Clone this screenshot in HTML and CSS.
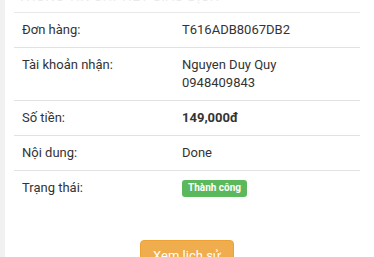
FILE: index.html
```html
<!DOCTYPE html>
<html lang="vi">
<head>
<meta charset="utf-8">
<link rel="stylesheet" href="styles.css">
</head>
<body>
<div class="page">
  <div class="card">
    <h3 class="title">THÔNG TIN CHI TIẾT GIAO DỊCH</h3>
    <table class="info">
      <tr><td class="lbl">Đơn hàng:</td><td>T616ADB8067DB2</td></tr>
      <tr><td class="lbl">Tài khoản nhận:</td><td>Nguyen Duy Quy<br>0948409843</td></tr>
      <tr><td class="lbl">Số tiền:</td><td><b>149,000đ</b></td></tr>
      <tr><td class="lbl">Nội dung:</td><td>Done</td></tr>
      <tr><td class="lbl">Trạng thái:</td><td><span class="badge">Thành công</span></td></tr>
    </table>
    <div class="actions"><button class="btn">Xem lịch sử</button></div>
  </div>
</div>
</body>
</html>
```

FILE: styles.css
```css
html, body { margin: 0; padding: 0; background: #fff; }
body { font-family: Roboto, "Noto Sans", sans-serif; color: #333; font-size: 13px; }
.page { background: #f1f1f1; padding-left: 5px; height: 257px; overflow: hidden; }
.card { display: flow-root; background: #fff; padding: 0 14px 0 9px; height: 100%; }
.title { margin: -12px 0 0 0; height: 24px; font-size: 13px; line-height: 18px; font-weight: 400; color: #eaeaea; padding-left: 4px; letter-spacing: 0.5px; }
.info { width: 346px; border-collapse: collapse; }
.info td { border-top: 1px solid #e2e2e2; padding: 8px 8px; line-height: 18px; vertical-align: top; }
.info tr:first-child td { border-top: 1px solid #e8e8e8; }
.info td.lbl { width: 144px; }
.badge { display: inline-block; background: #5cb85c; color: #fff; font-weight: 700; font-size: 10px; line-height: 12px; padding: 2px 6px 3px; border-radius: 3px; vertical-align: top; margin-top: 1px; }
.actions { display: flex; justify-content: center; padding-top: 35px; }
.btn { background: #f0ad4e; border: 1px solid #eea236; color: #fff; font-family: Roboto, sans-serif; font-size: 13px; line-height: 18px; padding: 6px 12px; border-radius: 4px; }
```
